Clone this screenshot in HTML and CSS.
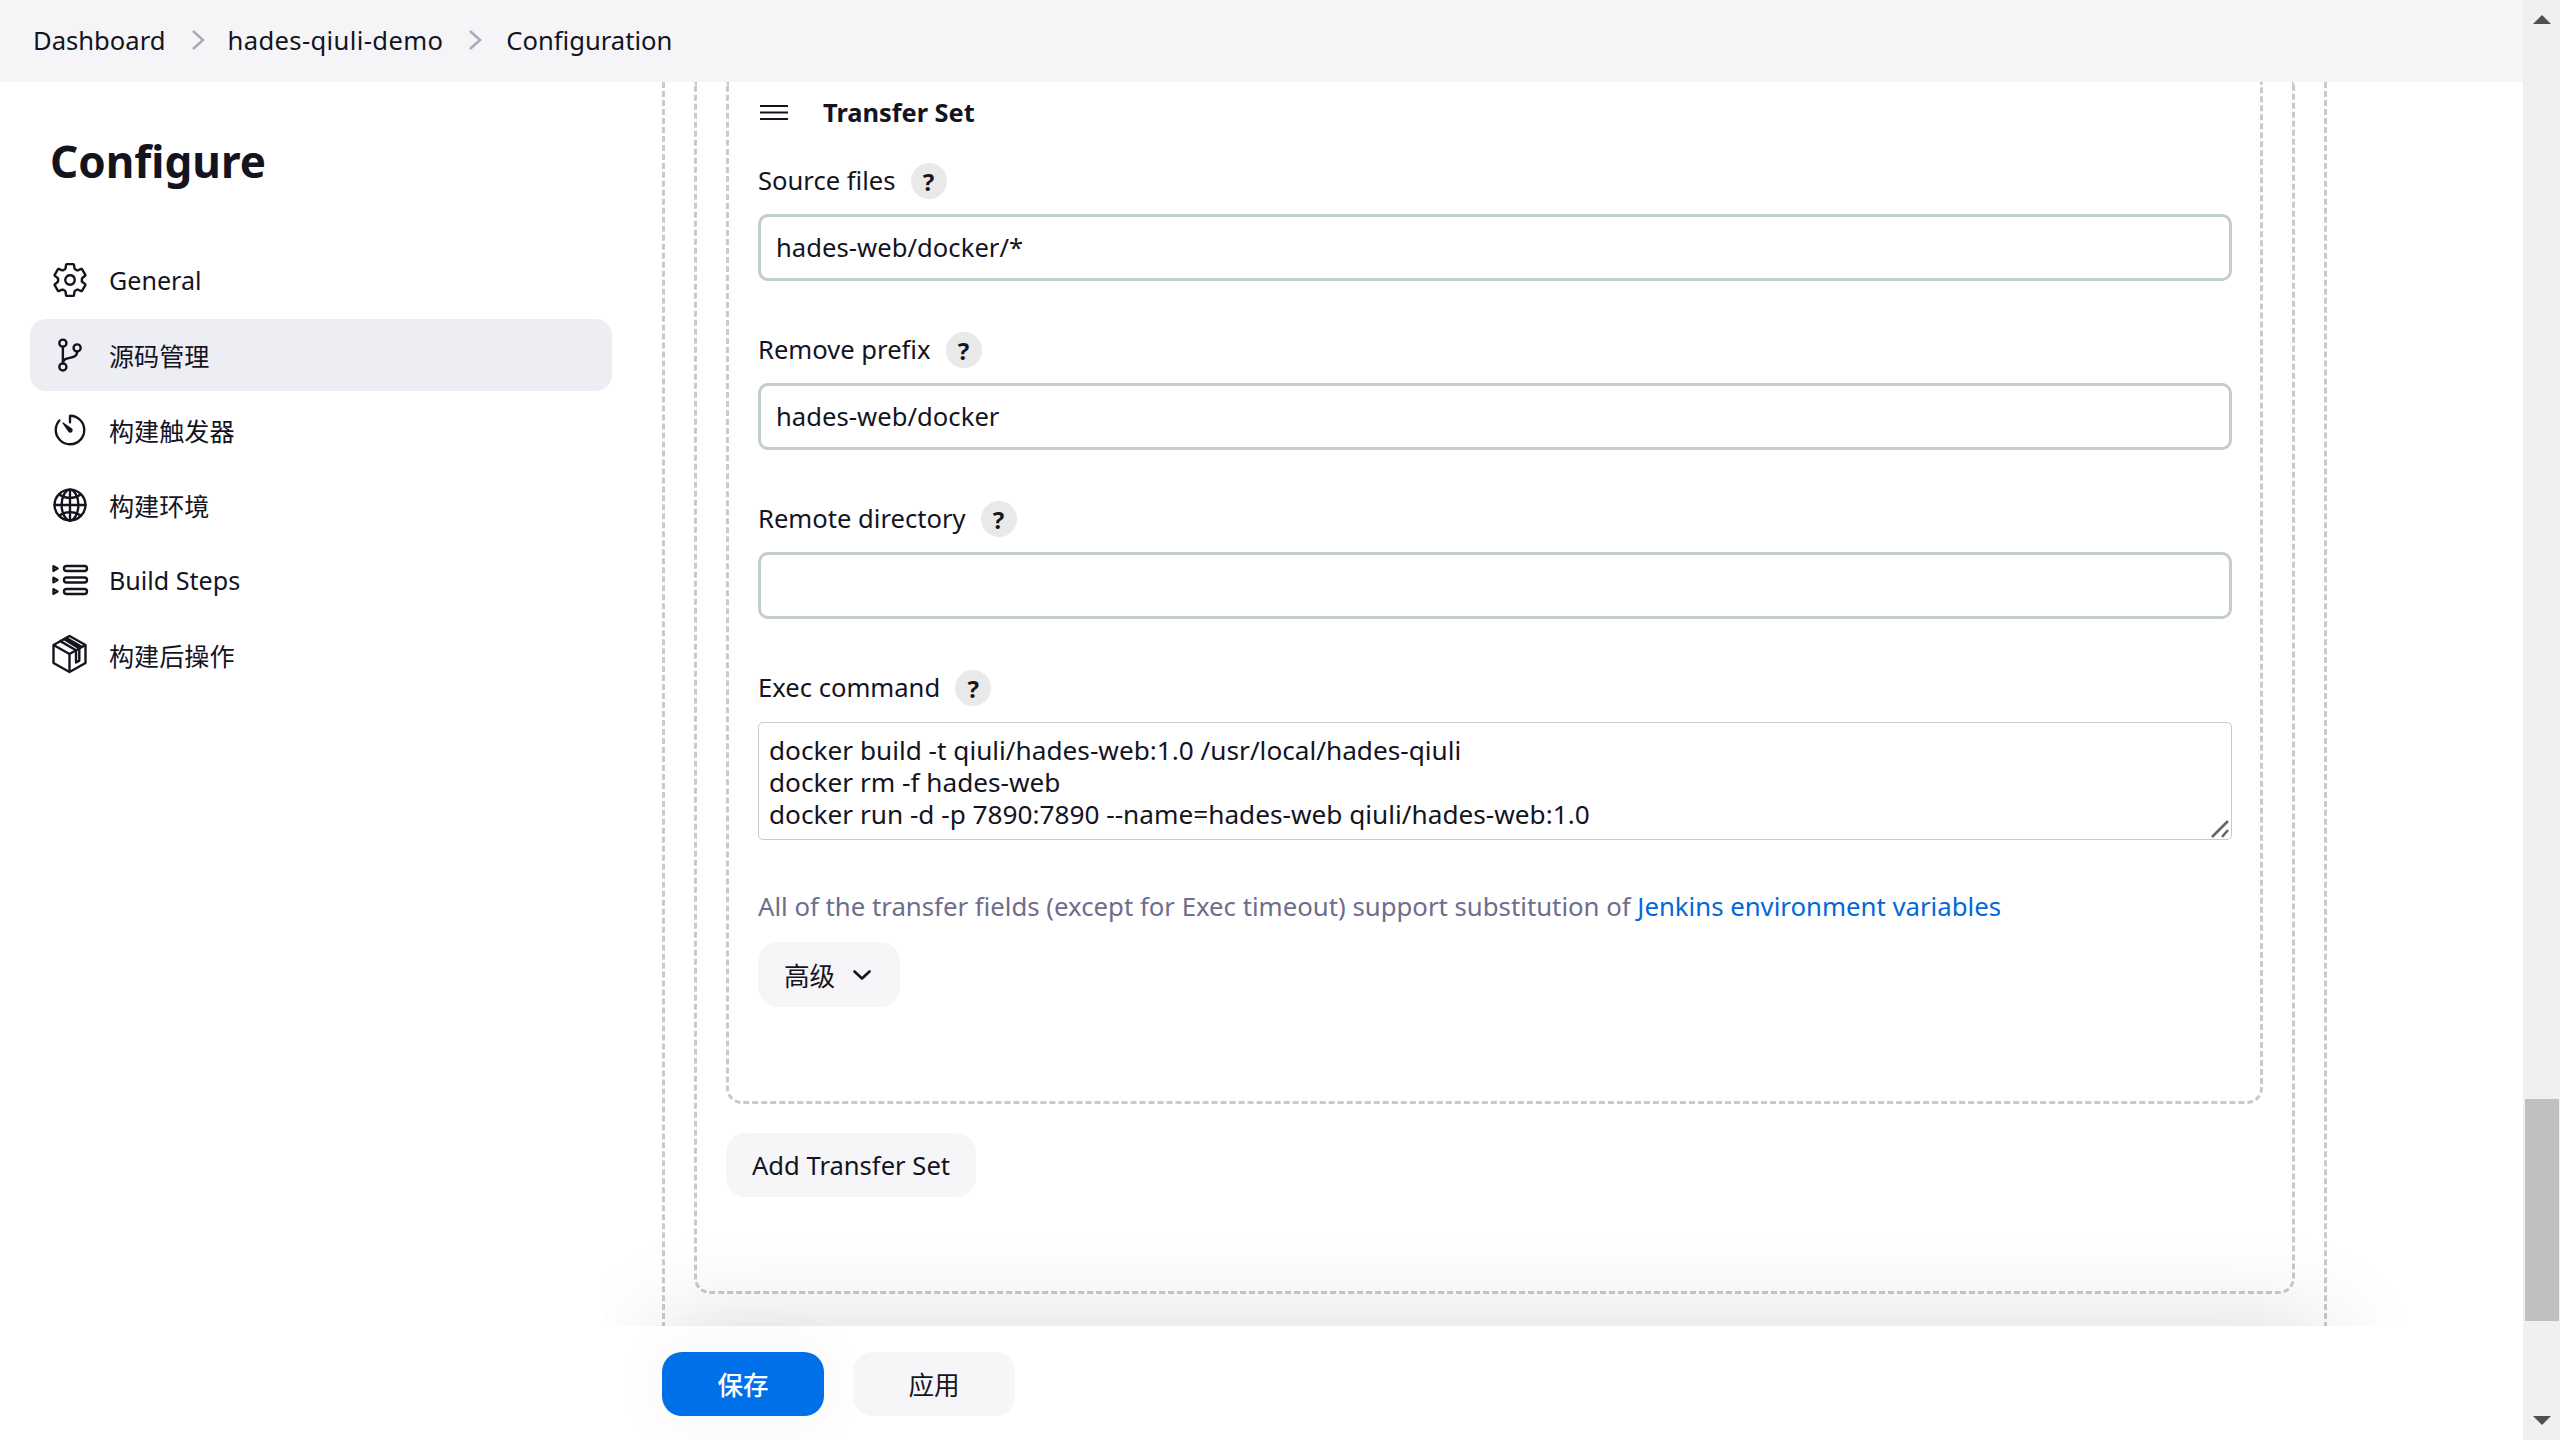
FILE: index.html
```html
<!DOCTYPE html>
<html lang="zh-CN">
<head>
<meta charset="utf-8">
<title>hades-qiuli-demo Config</title>
<link rel="stylesheet" href="styles.css">
</head>
<body>
<div class="window">
  <div class="page">
    <header class="crumbs">
      <span>Dashboard</span>
      <svg class="sep" viewBox="0 0 14 20"><path d="M2 1l10 9-10 9"/></svg>
      <span class="project">hades-qiuli-demo</span>
      <svg class="sep last" viewBox="0 0 14 20"><path d="M2 1l10 9-10 9"/></svg>
      <span>Configuration</span>
    </header>
    <div class="body">
      <aside class="side">
        <h1 class="title">Configure</h1>
        <nav class="nav">
          <a class="nav-item"><svg class="ico" viewBox="0 0 512 512"><path class="ln" d="M262.29 192.31a64 64 0 1 0 57.4 57.4 64.13 64.13 0 0 0-57.4-57.4zM416.39 256a154.34 154.34 0 0 1-1.53 20.79l45.21 35.46a10.81 10.81 0 0 1 2.45 13.75l-42.77 74a10.81 10.81 0 0 1-13.14 4.59l-44.9-18.08a16.11 16.11 0 0 0-15.17 1.75A164.48 164.48 0 0 1 325 400.8a15.94 15.94 0 0 0-8.82 12.14l-6.73 47.89a11.08 11.08 0 0 1-10.68 9.17h-85.54a11.11 11.11 0 0 1-10.69-8.87l-6.72-47.82a16.07 16.07 0 0 0-9-12.22 155.3 155.3 0 0 1-21.46-12.57 16 16 0 0 0-15.11-1.71l-44.89 18.07a10.81 10.81 0 0 1-13.14-4.58l-42.77-74a10.8 10.8 0 0 1 2.45-13.75l38.21-30a16.05 16.05 0 0 0 6-14.08c-.36-4.17-.58-8.33-.58-12.5s.21-8.27.58-12.35a16 16 0 0 0-6.07-13.94l-38.19-30A10.81 10.81 0 0 1 49.48 186l42.77-74a10.81 10.81 0 0 1 13.14-4.59l44.9 18.08a16.11 16.11 0 0 0 15.17-1.75A164.48 164.48 0 0 1 187 111.2a15.94 15.94 0 0 0 8.82-12.14l6.73-47.89A11.08 11.08 0 0 1 213.23 42h85.54a11.11 11.11 0 0 1 10.69 8.87l6.72 47.82a16.07 16.07 0 0 0 9 12.22 155.3 155.3 0 0 1 21.46 12.57 16 16 0 0 0 15.11 1.71l44.89-18.07a10.81 10.81 0 0 1 13.14 4.58l42.77 74a10.8 10.8 0 0 1-2.45 13.75l-38.21 30a16.05 16.05 0 0 0-6.05 14.08c.33 4.14.55 8.3.55 12.47z"/></svg><span>General</span></a>
          <a class="nav-item active"><svg class="ico" viewBox="0 0 512 512"><g class="ln"><circle cx="160" cy="96" r="48"/><circle cx="160" cy="416" r="48"/><path d="M160 144v224"/><circle cx="352" cy="160" r="48"/><path d="M352 208c0 128-192 48-192 160"/></g></svg><span>源码管理</span></a>
          <a class="nav-item"><svg class="ico" viewBox="0 0 512 512"><path class="ln" d="M112.91 128A191.85 191.85 0 0 0 64 254c-1.18 106.35 85.65 193.8 192 194 106.2.2 192-85.83 192-192 0-104.54-83.55-189.61-187.5-192a4.36 4.36 0 0 0-4.5 4.37V152"/><path class="sd" d="M233.38 278.63l-79-113a8.13 8.13 0 0 1 11.32-11.32l113 79a32.5 32.5 0 0 1-37.25 53.26 33.21 33.21 0 0 1-8.07-7.94z"/></svg><span>构建触发器</span></a>
          <a class="nav-item"><svg class="ico" viewBox="0 0 512 512"><g class="ln"><path d="M256 48C141.13 48 48 141.13 48 256s93.13 208 208 208 208-93.13 208-208S370.87 48 256 48z"/><path d="M256 48c-58.07 0-112.67 93.31-112.67 208S197.93 464 256 464s112.67-93.31 112.67-208S314.07 48 256 48z"/><path d="M117.33 117.33c38.24 27.15 86.38 43.34 138.67 43.34s100.43-16.19 138.67-43.34M394.67 394.67c-38.24-27.15-86.38-43.34-138.67-43.34s-100.43 16.19-138.67 43.34"/><path d="M256 48v416M464 256H48"/></g></svg><span>构建环境</span></a>
          <a class="nav-item"><svg class="ico" viewBox="0 0 38 38"><g class="ln2"><rect x="13" y="5" width="23" height="5" rx="2.500"/><rect x="13" y="16.500" width="23" height="5" rx="2.500"/><rect x="13" y="28" width="23" height="5" rx="2.500"/><path d="M2.500 5.200l4 2.300-4 2.300zM2.500 16.700l4 2.300-4 2.300zM2.500 28.200l4 2.300-4 2.300z"/></g></svg><span>Build Steps</span></a>
          <a class="nav-item"><svg class="ico" viewBox="0 0 38 38"><g class="ln2"><path d="M18.500 0l16 9v18l-16 9-16-9V9z"/><path d="M2.500 9l16 9 16-9M18.500 18v18"/><path d="M8.500 4.600l16.500 9.600v12.300l3.300-1.900V12.400L12.500 2.800M15 1.900l16 9.200"/></g></svg><span>构建后操作</span></a>
        </nav>
      </aside>
      <main class="main">
        <div class="scroll">
          <div class="box outer">
            <div class="box middle">
              <div class="box inner">
                <div class="set-head">
                  <svg class="grip" viewBox="0 0 28 17"><path d="M0 2h28M0 8.500h28M0 15h28"/></svg>
                  <strong>Transfer Set</strong>
                </div>
                <div class="field">
                  <div class="label"><span class="label-text">Source files</span><span class="help">?</span></div>
                  <input class="input" type="text" value="hades-web/docker/*">
                </div>
                <div class="field">
                  <div class="label"><span class="label-text">Remove prefix</span><span class="help">?</span></div>
                  <input class="input" type="text" value="hades-web/docker">
                </div>
                <div class="field">
                  <div class="label"><span class="label-text">Remote directory</span><span class="help">?</span></div>
                  <input class="input" type="text" value="">
                </div>
                <div class="field">
                  <div class="label tight"><span class="label-text">Exec command</span><span class="help">?</span></div>
                  <div class="area-wrap">
                    <textarea class="area" rows="3">docker build -t qiuli/hades-web:1.0 /usr/local/hades-qiuli
docker rm -f hades-web
docker run -d -p 7890:7890 --name=hades-web qiuli/hades-web:1.0</textarea>
                    <svg class="resizer" viewBox="0 0 18 18"><path d="M1 17L17 1M11 17l6-7"/></svg>
                  </div>
                </div>
                <p class="hint">All of the transfer fields (except for Exec timeout) support substitution of <a class="link">Jenkins environment variables</a></p>
                <button class="btn adv">高级<svg class="chev" viewBox="0 0 18 10"><path d="M1.500 1.500L9 8.500l7.500-7"/></svg></button>
              </div>
              <button class="btn add">Add Transfer Set</button>
            </div>
          </div>
        </div>
        <footer class="sticker">
          <button class="btn save">保存</button>
          <button class="btn apply">应用</button>
        </footer>
      </main>
    </div>
  </div>
  <div class="bar">
    <svg class="arrow" viewBox="0 0 18 9"><path d="M9 0l9 9H0z"/></svg>
    <div class="thumb"></div>
    <svg class="arrow down" viewBox="0 0 18 9"><path d="M0 0h18L9 9z"/></svg>
  </div>
</div>
</body>
</html>
```
FILE: styles.css
```css
* { box-sizing: border-box; }
html, body { margin: 0; height: 100%; overflow: hidden; background: #fff; }
body { font-family: "Noto Sans", "Noto Sans CJK SC", sans-serif; font-size: 25.6px; color: #14141f; }
.window { display: flex; width: 2560px; height: 1440px; }
.page { width: 2523px; display: flex; flex-direction: column; }

.crumbs { height: 82px; background: #f5f5f8; display: flex; align-items: center; padding: 0 0 2px 33px; font-size: 25.6px; flex: none; position: relative; z-index: 2; }
.sep { width: 14px; height: 20px; margin: 0 26px 0 25px; }
.sep.last { margin-right: 24px; }
.sep path { fill: none; stroke: #a9a9b8; stroke-width: 2.5; }
.project { margin-left: -3px; letter-spacing: .36px; }

.body { display: flex; flex: 1; min-height: 0; }
.side { width: 662px; flex: none; padding: 41px 0 0 30px; }
.title { margin: 0 0 45px 20px; font-size: 44px; line-height: 76px; font-weight: 700; }
.nav { display: flex; flex-direction: column; gap: 3px; width: 582px; font-size: 25.1px; }
.nav-item { height: 72px; display: flex; align-items: center; gap: 20px; padding-left: 21px; border-radius: 16px; }
.nav-item span { margin-top: -1px; }
.nav-item.active { background: #edeef3; }
.ico { width: 38px; height: 38px; flex: none; overflow: visible; }
.ln, .ln * { fill: none; stroke: #14141f; stroke-width: 32; stroke-linecap: round; stroke-linejoin: round; }
.sd { fill: #14141f; }
.ln2 * { fill: none; stroke: #14141f; stroke-width: 2.4; stroke-linejoin: round; }

.main { flex: 1; min-width: 0; display: flex; flex-direction: column; position: relative; }
.scroll { flex: 1; min-height: 0; overflow: hidden; position: relative; margin-left: -60px; padding-left: 60px; }
.scroll::after { content: ""; position: absolute; left: 60px; top: 100%; width: 1665px; height: 200px; box-shadow: 0 0 100px rgba(0,0,0,.15); }
.sticker { height: 114px; flex: none; background: #fff; display: flex; gap: 29px; padding-top: 26px; }

.box { border: 3px dashed #c3ccd1; border-top: 0; border-radius: 0 0 16px 16px; }
.outer { width: 1665px; height: 1300px; padding: 0 29px; border-bottom: 0; border-radius: 0; }
.middle { height: 1212px; padding: 0 29px; display: flex; flex-direction: column; align-items: flex-start; }
.inner { width: 100%; height: 1022px; padding: 0 28px 0 29px; margin-bottom: 29px; flex: none; }

.set-head { height: 60px; display: flex; align-items: center; gap: 35px; margin-left: 2px; font-size: 25.4px; }
.grip { width: 28px; height: 17px; flex: none; }
.grip path { stroke: #14141f; stroke-width: 2; fill: none; }
.field { margin-top: 21px; }
.field + .field { margin-top: 51px; }
.label { height: 36px; display: flex; align-items: center; gap: 15px; margin-bottom: 15px; }
.label-text { margin-top: -2px; }
.label.tight { margin-bottom: 16px; }
.help { width: 36px; height: 36px; border-radius: 50%; background: #e9e9e9; font-size: 24px; font-weight: 700; display: flex; align-items: center; justify-content: center; }
.input { display: block; width: 100%; height: 67px; border: 3px solid #c3ccd1; border-radius: 10px; padding: 0 15px; font: inherit; letter-spacing: .04px; color: #14141f; background: #fff; outline: 0; }
.area-wrap { position: relative; }
.area { display: block; width: 100%; height: 118px; border: 1.5px solid #c3ccd1; border-radius: 5px; padding: 11px 10px; font: inherit; font-size: 26.2px; line-height: 32px; color: #14141f; background: #fff; outline: 0; resize: none; overflow: hidden; }
.resizer { position: absolute; right: 3px; bottom: 2px; width: 18px; height: 18px; }
.resizer path { fill: none; stroke: #666; stroke-width: 2.6; }
.hint { margin: 46px 0 16px; line-height: 40px; font-size: 25.76px; color: #6d6d8c; }
.link { color: #0068d9; }

.btn { border: 0; font: inherit; color: #14141f; background: #f6f6f9; border-radius: 20px; display: flex; align-items: center; justify-content: center; padding: 0; }
.adv { width: 142px; height: 65px; gap: 18px; justify-content: flex-start; padding-left: 26px; }
.chev { width: 18px; height: 10px; }
.chev path { fill: none; stroke: #14141f; stroke-width: 2.6; stroke-linecap: round; stroke-linejoin: round; }
.add { width: 250px; height: 64px; }
.save { width: 162px; height: 64px; background: #0070e8; color: #fff; font-weight: 500; box-shadow: 0 0 60px rgba(0,0,0,.05); }
.apply { width: 162px; height: 64px; }

.bar { width: 37px; flex: none; background: #f0f0f0; display: flex; flex-direction: column; align-items: center; position: relative; }
.arrow { width: 18px; height: 9px; margin-top: 15px; flex: none; }
.arrow path { fill: #505050; }
.arrow.down { margin-top: 95px; }
.thumb { width: 34px; height: 222px; background: #c0c0c0; margin-top: 1075px; margin-left: 1px; flex: none; }
```
